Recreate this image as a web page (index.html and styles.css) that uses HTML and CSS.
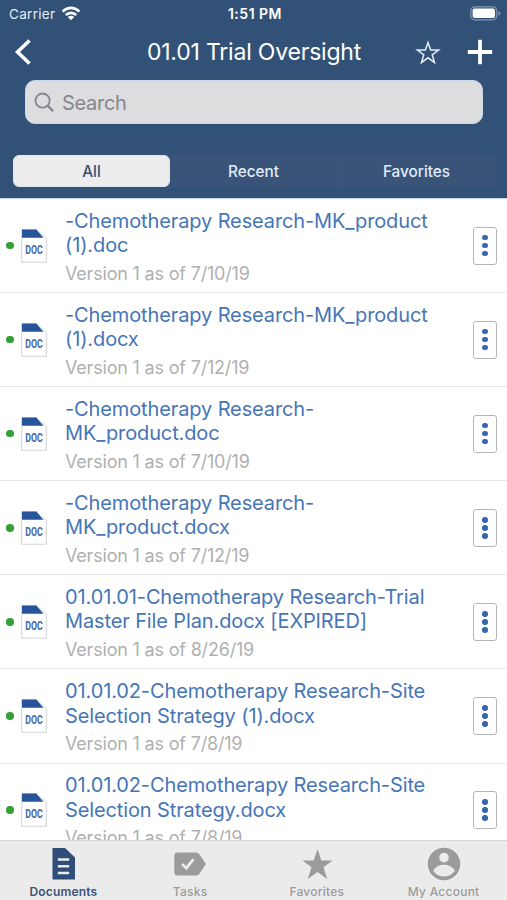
FILE: index.html
```html
<!DOCTYPE html>
<html lang="en">
<head>
<meta charset="utf-8">
<title>01.01 Trial Oversight</title>
<link rel="stylesheet" href="styles.css">
</head>
<body>
<svg class="defs" width="0" height="0">
  <symbol id="doc" viewBox="0 0 26 34">
    <path d="M.7.7H20.5L25.3 8V33.3H.7Z" fill="#fff" stroke="#d3d5d9" stroke-width="1.1"/>
    <path d="M15.5 0H26V8.8H22.5Z" fill="#fff"/>
    <path d="M1 .5H15.5L22.5 8.8H1Z" fill="#28549a"/>
    <path d="M15.5 .5 22.5 8.6H25.5Z" fill="#dde2ea"/>
    <text class="doc-label" x="4.3" y="24.6" textLength="17.6" lengthAdjust="spacingAndGlyphs">DOC</text>
  </symbol>
</svg>
<div class="app">
  <header class="header">
    <div class="status">
      <div class="carrier"><span>Carrier</span>
        <svg width="20" height="15" viewBox="0 0 20 15"><g fill="none" stroke="#fff" stroke-width="2.7"><path d="M1.6 5.4Q10-1.8 18.4 5.4"/><path d="M4.8 9Q10 4.6 15.2 9"/></g><path d="M6.8 11Q10 8.5 13.2 11L10 14.2Z" fill="#fff"/></svg>
      </div>
      <div class="time">1:51 PM</div>
      <svg class="battery" width="31" height="15" viewBox="0 0 31 15"><rect x=".8" y=".8" width="26" height="13" rx="4" fill="none" stroke="#8396b4" stroke-width="1.2"/><rect x="2.6" y="2.6" width="22.4" height="9.4" rx="2" fill="#fff"/><path d="M28.5 5Q30.5 6 30.5 7.4T28.5 9.8Z" fill="#8396b4"/></svg>
    </div>
    <div class="nav">
      <svg width="18" height="26" viewBox="0 0 18 26"><path d="M15.5 1.5 3.5 13 15.5 24.5" fill="none" stroke="#fff" stroke-width="3.6"/></svg>
      <h1>01.01 Trial Oversight</h1>
      <svg class="star" width="26" height="25" viewBox="0 0 26 25"><path d="M13 2.5 15.6 10H23.6L17.2 14.8 19.5 22.5 13 17.8 6.5 22.5 8.8 14.8 2.4 10H10.4Z" fill="none" stroke="#e3edfa" stroke-width="1.5"/></svg>
      <svg class="plus" width="26" height="26" viewBox="0 0 26 26"><path d="M13 .8V25.2M.8 13H25.2" stroke="#fff" stroke-width="3.8"/></svg>
    </div>
    <div class="search">
      <svg width="21" height="21" viewBox="0 0 22 22"><g fill="none" stroke="#85868b" stroke-width="1.9"><circle cx="9" cy="9" r="7.4"/><path d="M14.2 14.2 20 20" stroke-width="2.4"/></g></svg>
      <span>Search</span>
    </div>
    <div class="segments">
      <div class="segment selected">All</div>
      <div class="segment">Recent</div>
      <div class="segment last">Favorites</div>
    </div>
  </header>
  <main class="list">
    <div class="row"><i class="dot"></i><svg class="doc"><use href="#doc"/></svg><div class="info"><div class="name">-Chemotherapy Research-MK_product<br>(1).doc</div><div class="version">Version 1 as of 7/10/19</div></div><div class="more"><i></i><i></i><i></i></div></div>
    <div class="row"><i class="dot"></i><svg class="doc"><use href="#doc"/></svg><div class="info"><div class="name">-Chemotherapy Research-MK_product<br>(1).docx</div><div class="version">Version 1 as of 7/12/19</div></div><div class="more"><i></i><i></i><i></i></div></div>
    <div class="row"><i class="dot"></i><svg class="doc"><use href="#doc"/></svg><div class="info"><div class="name">-Chemotherapy Research-<br>MK_product.doc</div><div class="version">Version 1 as of 7/10/19</div></div><div class="more"><i></i><i></i><i></i></div></div>
    <div class="row"><i class="dot"></i><svg class="doc"><use href="#doc"/></svg><div class="info"><div class="name">-Chemotherapy Research-<br>MK_product.docx</div><div class="version">Version 1 as of 7/12/19</div></div><div class="more"><i></i><i></i><i></i></div></div>
    <div class="row"><i class="dot"></i><svg class="doc"><use href="#doc"/></svg><div class="info"><div class="name">01.01.01-Chemotherapy Research-Trial<br>Master File Plan.docx [EXPIRED]</div><div class="version">Version 1 as of 8/26/19</div></div><div class="more"><i></i><i></i><i></i></div></div>
    <div class="row"><i class="dot"></i><svg class="doc"><use href="#doc"/></svg><div class="info"><div class="name">01.01.02-Chemotherapy Research-Site<br>Selection Strategy (1).docx</div><div class="version">Version 1 as of 7/8/19</div></div><div class="more"><i></i><i></i><i></i></div></div>
    <div class="row"><i class="dot"></i><svg class="doc"><use href="#doc"/></svg><div class="info"><div class="name">01.01.02-Chemotherapy Research-Site<br>Selection Strategy.docx</div><div class="version">Version 1 as of 7/8/19</div></div><div class="more"><i></i><i></i><i></i></div></div>
  </main>
  <nav class="tabs">
    <div class="tab active"><svg width="34" height="34" viewBox="0 0 34 34"><path d="M6.5 1H19L29 10.5V32.5H6.5Z" fill="#2f4d79"/><path d="M11.8 12.5H23.2M11.8 19.2H23.2M11.8 26H23.2" stroke="#ebebeb" stroke-width="2.6"/></svg><span>Documents</span></div>
    <div class="tab"><svg width="34" height="34" viewBox="0 0 34 34"><path d="M4.5 5.5H23Q25 5.5 26.2 7L33 17 26.2 27Q25 28.5 23 28.5H4.5Q1.3 28.5 1.3 25.3V8.7Q1.3 5.5 4.5 5.5Z" fill="#9b9b9b"/><path d="M9 17 13.4 21.2 20.5 12.2" fill="none" stroke="#ebebeb" stroke-width="2.8"/></svg><span>Tasks</span></div>
    <div class="tab"><svg width="34" height="34" viewBox="0 0 34 34"><path d="M17.5 2 21.3 13.5H32.5L23.5 20.2 27.2 32 17.5 25 7.8 32 11.5 20.2 2.5 13.5H13.7Z" fill="#9b9b9b"/></svg><span>Favorites</span></div>
    <div class="tab"><svg width="34" height="34" viewBox="0 0 34 34"><circle cx="17" cy="17" r="16.2" fill="#9b9b9b"/><circle cx="17" cy="10.6" r="4.8" fill="#ebebeb"/><path d="M6 23.5Q10 17.8 17 17.8T28 23.5Q24 29.5 17 29.5T6 23.5Z" fill="#ebebeb"/></svg><span>My Account</span></div>
  </nav>
</div>
</body>
</html>
```

FILE: styles.css
```css
* { box-sizing: border-box; }
body { margin: 0; font-family: Inter, "Liberation Sans", sans-serif; background: #fff; }
svg { display: block; flex: none; }
.defs { display: none; }
.app { width: 507px; height: 900px; display: flex; flex-direction: column; overflow: hidden; }
.header { flex: none; height: 199px; background: #325177; color: #fff; border-bottom: 1px solid #c5d5e9; }
.status { height: 27px; padding: 0 6px 0 9px; display: grid; grid-template-columns: 1fr auto 1fr; align-items: center; font-size: 13.5px; }
.carrier { display: flex; gap: 6px; align-items: center; color: #e4ecf8; letter-spacing: .3px; }
.time { font-weight: 600; font-size: 14px; letter-spacing: .5px; }
.battery { justify-self: end; }
.nav { height: 50px; padding: 0 14px; display: grid; grid-template-columns: 105px 1fr 78px 26px; align-items: center; }
h1 { margin: 0; text-align: center; font-size: 23px; font-weight: 400; white-space: nowrap; letter-spacing: -.2px; }
.star { justify-self: center; }
.search { height: 44px; margin: 3px 24px 0 25px; padding: 1px 0 0 8px; display: flex; align-items: center; gap: 7px; background: #dddde0; border: 1px solid #cbd7ea; border-radius: 10px; color: #85868b; font-size: 20px; letter-spacing: -.3px; }
.segments { height: 34px; margin: 30px 10px 0 12px; padding: 1px; display: grid; grid-template-columns: 158px 165px 1fr; background: #395478; border-radius: 7px; font-size: 15.3px; font-weight: 500; }
.segment { display: flex; align-items: center; justify-content: center; color: #e0ebfb; }
.last { border-left: 1px solid #3d587d; }
.selected { background: #ededee; color: #365273; border-radius: 6px; margin: 0 1px 0 0; border: 1px solid #dce4f0; }
.list { flex: 1; min-height: 0; overflow: hidden; }
.row { height: 94.1px; padding: 0 10px 0 6px; display: flex; align-items: center; border-bottom: 1px solid #e7e7e9; }
.dot { width: 7.5px; height: 7.5px; border-radius: 50%; background: #33a036; flex: none; }
.doc { width: 26px; height: 34px; margin-left: 7.5px; }
.doc-label { font-family: Roboto, "Liberation Sans", sans-serif; font-size: 13px; font-weight: 700; fill: #4469a6; }
.info { flex: 1; margin-left: 18px; padding-top: 3px; white-space: nowrap; }
.name { color: #4675b7; font-size: 20px; line-height: 24.5px; letter-spacing: -.12px; }
.version { color: #b0b0b0; font-size: 18px; line-height: 24px; margin-top: 4px; letter-spacing: -.19px; }
.more { width: 24px; height: 38px; border: 1.5px solid #b4b6b9; border-radius: 3px; display: flex; flex-direction: column; align-items: center; justify-content: center; gap: 2.5px; flex: none; }
.more i { width: 5.5px; height: 5.5px; border-radius: 50%; background: #3668ad; }
.tabs { flex: none; height: 60px; border-top: 1px solid #d9d9d9; background: #ebebeb; display: grid; grid-template-columns: repeat(4, 1fr); }
.tab { display: flex; flex-direction: column; align-items: center; padding-top: 6px; color: #9b9b9b; font-size: 12px; font-weight: 500; line-height: 16px; letter-spacing: .25px; }
.tab span { margin-top: 3px; }
.active { color: #3d5479; font-weight: 600; letter-spacing: .15px; }
```
